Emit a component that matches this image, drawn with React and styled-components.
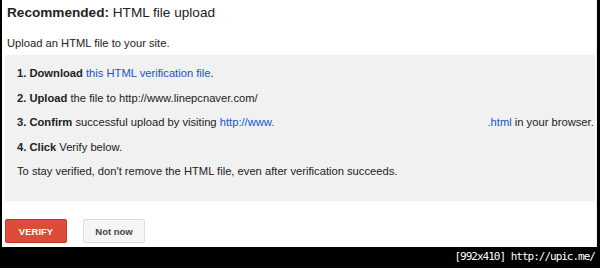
import React from "react";
import styled, { createGlobalStyle } from "styled-components";

const GlobalStyle = createGlobalStyle`
  html, body {
    margin: 0;
    padding: 0;
    background: #000;
  }
`;

const Frame = styled.div`
  width: 600px;
  height: 268px;
  background: #000;
  display: flex;
  flex-direction: column;
  font-family: Arial, "Liberation Sans", sans-serif;
  color: #222;
`;

const Sheet = styled.div`
  margin-left: 2px;
  width: 595px;
  height: 247px;
  background: #fff;
  box-sizing: border-box;
  border-right: 1px solid #eee;
  padding: 3px 0 0 0;
`;

const Title = styled.h2`
  margin: 0 0 0 5px;
  font-size: 13.6px;
  font-weight: normal;
  line-height: 20px;

  b {
    font-weight: bold;
  }
`;

const Intro = styled.p`
  margin: 13px 0 0 5px;
  font-size: 11.2px;
  line-height: 14px;
`;

const Panel = styled.div`
  margin: 5px 0 0 3px;
  width: 590px;
  height: 146px;
  background: #f1f1f1;
  box-sizing: border-box;
  padding: 11px 0 0 12px;
`;

const Step = styled.p`
  margin: 0 0 10.5px 0;
  font-size: 11.2px;
  line-height: 14px;

  b {
    font-weight: bold;
  }
`;

const Link = styled.a`
  color: #1155cc;
  text-decoration: none;
`;

const Gap = styled.span`
  display: inline-block;
  width: ${(p) => p.$w}px;
`;

const Actions = styled.div`
  display: flex;
  gap: 16px;
  margin: 18px 0 0 3px;
`;

const Button = styled.button`
  height: 24px;
  width: 62px;
  box-sizing: border-box;
  border-radius: 2px;
  font-family: Arial, "Liberation Sans", sans-serif;
  font-size: 9.5px;
  font-weight: bold;
  padding: 0;
  cursor: pointer;
  border: 1px solid ${(p) => (p.$primary ? "#c53727" : "#dcdcdc")};
  background: ${(p) => (p.$primary ? "#dd4b39" : "#f5f5f5")};
  color: ${(p) => (p.$primary ? "#fff" : "#444")};
`;

const Stamp = styled.div`
  flex: 1;
  display: flex;
  align-items: center;
  justify-content: flex-end;
  padding: 0 5px 2px 0;
  color: #fff;
  font-family: "DejaVu Sans Mono", monospace;
  font-size: 11px;
  letter-spacing: -1px;
`;

export default function App() {
  return (
    <>
      <GlobalStyle />
      <Frame>
        <Sheet>
          <Title>
            <b>Recommended:</b> HTML file upload
          </Title>
          <Intro>Upload an HTML file to your site.</Intro>
          <Panel>
            <Step>
              <b>1. Download</b> <Link href="#">this HTML verification file</Link>.
            </Step>
            <Step>
              <b>2. Upload</b> the file to http://www.linepcnaver.com/
            </Step>
            <Step>
              <b>3. Confirm</b> successful upload by visiting{" "}
              <Link href="#">
                http://www.
                <Gap $w={213} />
                .html
              </Link>{" "}
              in your browser.
            </Step>
            <Step>
              <b>4. Click</b> Verify below.
            </Step>
            <Step>
              To stay verified, don't remove the HTML file, even after
              verification succeeds.
            </Step>
          </Panel>
          <Actions>
            <Button $primary>VERIFY</Button>
            <Button>Not now</Button>
          </Actions>
        </Sheet>
        <Stamp>[992x410] http://upic.me/</Stamp>
      </Frame>
    </>
  );
}
